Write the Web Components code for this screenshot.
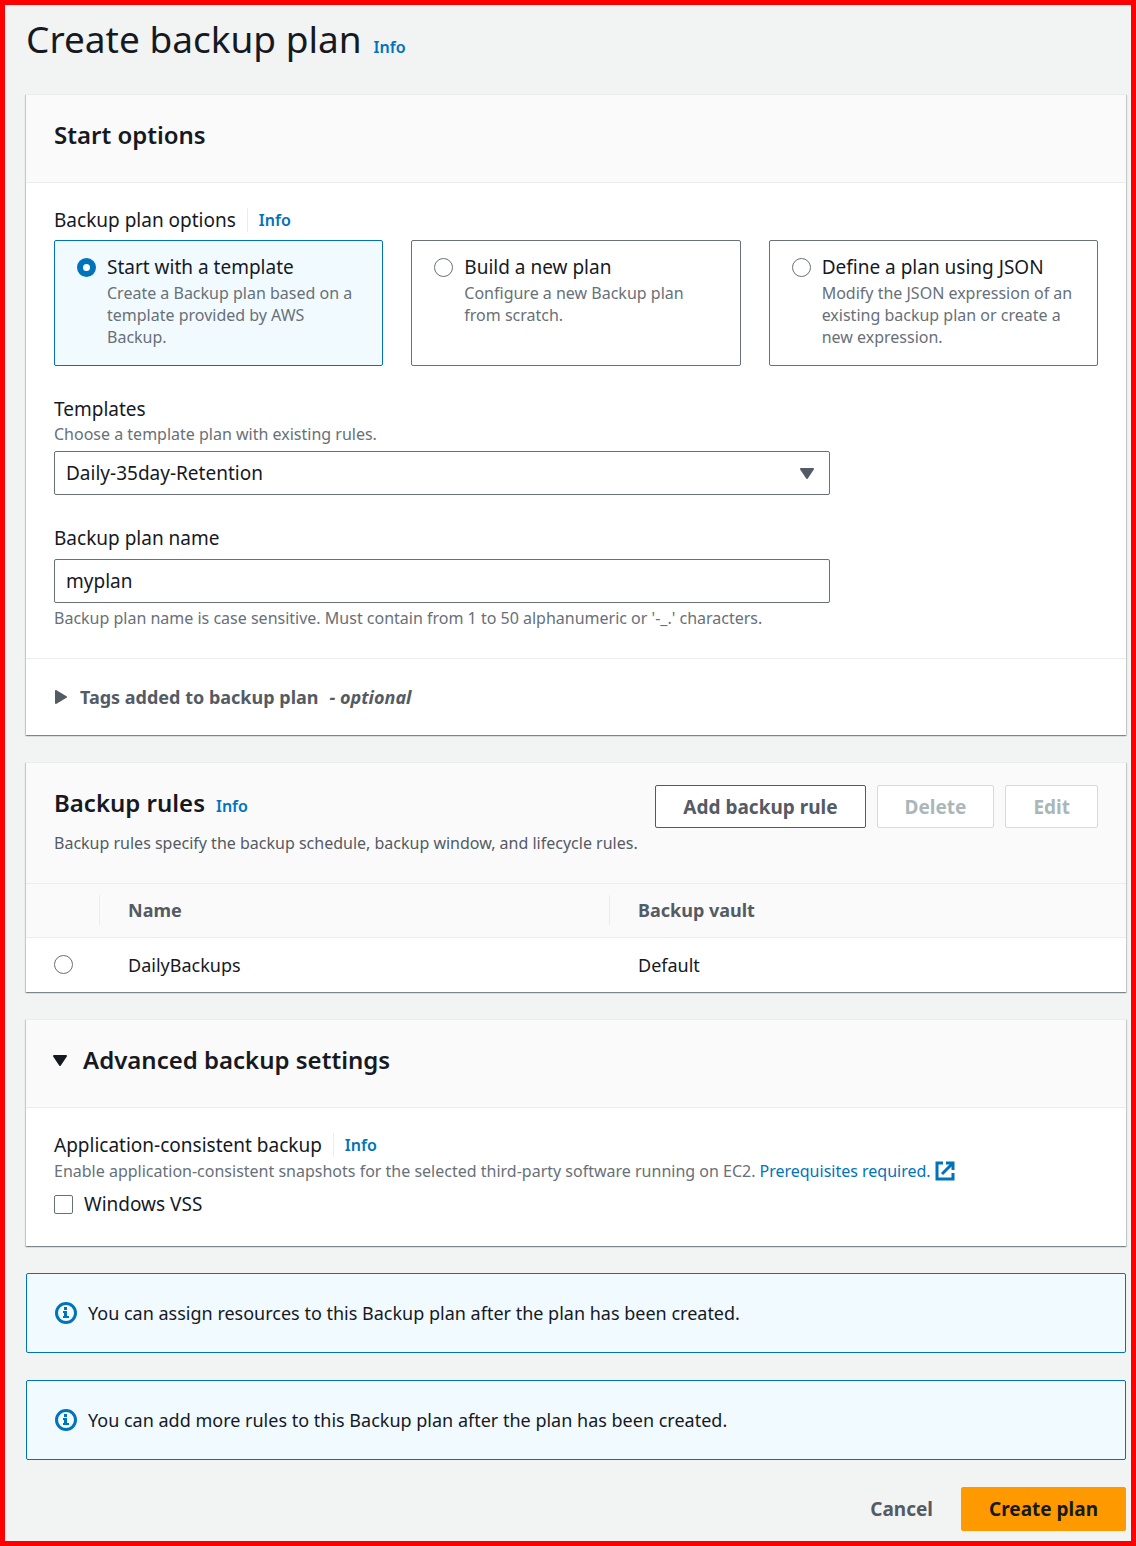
<!DOCTYPE html>
<html lang="en">
<head>
<meta charset="UTF-8">
<meta name="viewport" content="width=device-width, initial-scale=1.0">
<title>Create backup plan</title>
<style>
  :root {
    --text: #16191f;
    --muted: #687078;
    --strong: #545b64;
    --blue: #0073bb;
    --blue-bg: #f1faff;
    --line: #eaeded;
    --gutter: 28px;
    --body: 18px;
    --field: 19px;
    --small: 16px;
  }
  html { background: #f2f3f3; }
  body {
    margin: 0;
    font-family: "Noto Sans", "Open Sans", sans-serif;
    font-size: var(--body);
    line-height: 26px;
    color: var(--text);
  }
</style>
</head>
<body>
<backup-page>
  <page-title slot="title" heading="Create backup plan"></page-title>

  <plan-panel>
    <panel-header slot="header" heading="Start options"></panel-header>
    <plan-tiles></plan-tiles>
    <plan-select label="Templates" hint="Choose a template plan with existing rules." value="Daily-35day-Retention"></plan-select>
    <plan-input label="Backup plan name" hint="Backup plan name is case sensitive. Must contain from 1 to 50 alphanumeric or '-_.' characters." value="myplan"></plan-input>
    <tags-section slot="footer"></tags-section>
  </plan-panel>

  <plan-panel flush>
    <panel-header slot="header" heading="Backup rules" info description="Backup rules specify the backup schedule, backup window, and lifecycle rules.">
      <plan-button slot="actions">Add backup rule</plan-button>
      <plan-button slot="actions" disabled>Delete</plan-button>
      <plan-button slot="actions" disabled>Edit</plan-button>
    </panel-header>
    <rules-table></rules-table>
  </plan-panel>

  <plan-panel>
    <panel-header slot="header" heading="Advanced backup settings" expandable></panel-header>
    <vss-field></vss-field>
  </plan-panel>

  <info-alert>You can assign resources to this Backup plan after the plan has been created.</info-alert>
  <info-alert>You can add more rules to this Backup plan after the plan has been created.</info-alert>

  <plan-button slot="actions" variant="link">Cancel</plan-button>
  <plan-button slot="actions" variant="primary">Create plan</plan-button>
</backup-page>

<script>
const base = `
  :host, *, *::before, *::after { box-sizing: border-box; }
  :host { display: block; }
`;

// shared by every element that draws a form field
const fieldStyles = `
  :host { font-size: var(--field); }
  .label { display: flex; align-items: center; }
  .hint { font-size: var(--small); line-height: 22px; color: var(--muted); }
  .control {
    display: block;
    width: 100%;
    height: 44px;
    margin: 0;
    padding: 0 11px;
    border: 1px solid #687078;
    border-radius: 2px;
    background: #fff;
    color: var(--text);
    font: inherit;
    line-height: 26px;
  }
  .divided {
    display: flex;
    margin-left: 11px;
    padding-left: 11px;
    border-left: 1px solid var(--line);
    line-height: 24px;
  }
`;

const radioStyles = `
  input[type=radio] {
    appearance: none;
    flex: none;
    display: block;
    width: 19px;
    height: 19px;
    margin: 0;
    border: 1px solid #687078;
    border-radius: 50%;
    background: #fff;
  }
  input[type=radio]:checked { border: 6px solid var(--blue); }
`;

const caretDown = `
  <svg width="14" height="11" viewBox="0 0 14 11" aria-hidden="true"><path d="M1 1h12L7 10z" fill="currentColor" stroke="currentColor" stroke-width="2" stroke-linejoin="round"/></svg>
`;

class BackupPage extends HTMLElement {
  constructor() {
    super();
    this.attachShadow({ mode: "open" });
  }
  connectedCallback() {
    this.shadowRoot.innerHTML = `
      <style>
        ${base}
        :host {
          min-height: 100vh;
          padding: 9px 5px 10px 21px;
          border: 5px solid #f00;
          background: #f2f3f3;
        }
        main { display: flex; flex-direction: column; gap: 27px; margin-top: 30px; }
        footer { display: flex; justify-content: flex-end; }
      </style>
      <slot name="title"></slot>
      <main>
        <slot></slot>
        <footer><slot name="actions"></slot></footer>
      </main>
    `;
  }
}
customElements.define("backup-page", BackupPage);

class InfoLink extends HTMLElement {
  constructor() {
    super();
    this.attachShadow({ mode: "open" });
  }
  connectedCallback() {
    this.shadowRoot.innerHTML = `
      <style>
        :host { display: inline-block; font-size: var(--small); }
        a {
          color: var(--blue);
          font-weight: 600;
          text-decoration: none;
        }
        a:hover { text-decoration: underline; }
      </style>
      <a href="#info">Info</a>
    `;
  }
}
customElements.define("info-link", InfoLink);

class PageTitle extends HTMLElement {
  constructor() {
    super();
    this.attachShadow({ mode: "open" });
  }
  connectedCallback() {
    this.shadowRoot.innerHTML = `
      <style>
        ${base}
        :host { display: flex; align-items: baseline; gap: 12px; }
        h1 { margin: 0; font-size: 37px; font-weight: 400; line-height: 50px; }
      </style>
      <h1>${this.getAttribute("heading")}</h1>
      <info-link></info-link>
    `;
  }
}
customElements.define("page-title", PageTitle);

class PlanPanel extends HTMLElement {
  constructor() {
    super();
    this.attachShadow({ mode: "open" });
  }
  connectedCallback() {
    this.shadowRoot.innerHTML = `
      <style>
        ${base}
        :host {
          border-top: 1px solid var(--line);
          background: #fff;
          box-shadow: 0 1px 1px 0 rgba(0,28,36,.3), 1px 1px 1px 0 rgba(0,28,36,.15), -1px 1px 1px 0 rgba(0,28,36,.15);
        }
        .body {
          display: flex;
          flex-direction: column;
          gap: 30px;
          padding: 24px var(--gutter) 29px;
        }
        :host([flush]) .body { padding: 0; }
      </style>
      <section>
        <slot name="header"></slot>
        <div class="body"><slot></slot></div>
        <slot name="footer"></slot>
      </section>
    `;
  }
}
customElements.define("plan-panel", PlanPanel);

class PanelHeader extends HTMLElement {
  constructor() {
    super();
    this.attachShadow({ mode: "open" });
  }
  connectedCallback() {
    const heading = this.getAttribute("heading");
    const description = this.getAttribute("description");
    const info = this.hasAttribute("info") ? "<info-link></info-link>" : "";
    const title = this.hasAttribute("expandable")
      ? `<h2><button type="button" aria-expanded="true">${caretDown}${heading}</button></h2>`
      : `<h2>${heading}</h2>`;
    this.shadowRoot.innerHTML = `
      <style>
        ${base}
        :host {
          display: flex;
          justify-content: space-between;
          align-items: flex-start;
          padding: 22px var(--gutter) 29px;
          border-bottom: 1px solid var(--line);
          background: #fafafa;
        }
        .title { display: flex; align-items: baseline; gap: 11px; }
        h2 { margin: 0; font-size: 24px; font-weight: 600; line-height: 36px; }
        p { margin: 11px 0 0; font-size: var(--small); line-height: 22px; color: var(--strong); }
        .actions { display: flex; gap: 11px; }
        button {
          display: flex;
          align-items: center;
          gap: 16px;
          padding: 0;
          border: 0;
          background: none;
          color: inherit;
          font: inherit;
        }
        svg { display: block; margin-left: -1px; }
      </style>
      <div>
        <div class="title">${title}${info}</div>
        ${description ? `<p>${description}</p>` : ""}
      </div>
      <div class="actions"><slot name="actions"></slot></div>
    `;
  }
}
customElements.define("panel-header", PanelHeader);

class PlanButton extends HTMLElement {
  constructor() {
    super();
    this.attachShadow({ mode: "open" });
  }
  connectedCallback() {
    this.shadowRoot.innerHTML = `
      <style>
        ${base}
        :host { font-size: var(--field); }
        button {
          display: block;
          height: 43px;
          padding: 0 27px;
          border: 1px solid var(--strong);
          border-radius: 2px;
          background: #fff;
          color: var(--strong);
          font: inherit;
          font-weight: 700;
          white-space: nowrap;
          cursor: pointer;
        }
        button:disabled { border-color: #d5dbdb; color: #aab7b8; cursor: default; }
        :host([variant]) button { height: 44px; border-color: transparent; background: none; }
        :host([variant=primary]) button { background: #f90; border-color: #f90; color: var(--text); }
      </style>
      <button type="button" ${this.hasAttribute("disabled") ? "disabled" : ""}><slot></slot></button>
    `;
  }
}
customElements.define("plan-button", PlanButton);

const tiles = [
  { id: "template", title: "Start with a template", text: "Create a Backup plan based on a template provided by AWS Backup." },
  { id: "new", title: "Build a new plan", text: "Configure a new Backup plan from scratch." },
  { id: "json", title: "Define a plan using JSON", text: "Modify the JSON expression of an existing backup plan or create a new expression." },
];

class PlanTiles extends HTMLElement {
  constructor() {
    super();
    this.attachShadow({ mode: "open" });
  }
  connectedCallback() {
    this.shadowRoot.innerHTML = `
      <style>
        ${base}
        ${fieldStyles}
        ${radioStyles}
        .tiles {
          display: grid;
          grid-template-columns: repeat(3, 1fr);
          gap: var(--gutter);
          margin-top: 7px;
        }
        .tile {
          display: flex;
          gap: 11px;
          padding: 13px 18px 17px 22px;
          border: 1px solid #687078;
          border-radius: 2px;
        }
        .tile:has(:checked) { border-color: var(--blue); background: var(--blue-bg); }
        .tile input { margin-top: 4px; }
        .tile span { display: block; }
        .tile .hint { margin-top: 2px; }
      </style>
      <div role="radiogroup" aria-labelledby="legend">
        <div class="label"><span id="legend">Backup plan options</span><span class="divided"><info-link></info-link></span></div>
        <div class="tiles">
          ${tiles.map((t, i) => `
            <label class="tile" for="${t.id}">
              <input type="radio" name="start" id="${t.id}" ${i === 0 ? "checked" : ""}>
              <span><span>${t.title}</span><span class="hint">${t.text}</span></span>
            </label>`).join("")}
        </div>
      </div>
    `;
  }
}
customElements.define("plan-tiles", PlanTiles);

class PlanSelect extends HTMLElement {
  constructor() {
    super();
    this.attachShadow({ mode: "open" });
  }
  connectedCallback() {
    this.shadowRoot.innerHTML = `
      <style>
        ${base}
        ${fieldStyles}
        :host { width: calc(75% - 7px); }
        .hint { margin: 1px 0 6px; }
        .box { display: grid; align-items: center; }
        .box > * { grid-area: 1 / 1; }
        select { appearance: none; }
        svg { justify-self: end; margin-right: 16px; color: var(--strong); pointer-events: none; }
      </style>
      <label class="label" for="field">${this.getAttribute("label")}</label>
      <div class="hint" id="hint">${this.getAttribute("hint")}</div>
      <div class="box">
        <select class="control" id="field" aria-describedby="hint"><option>${this.getAttribute("value")}</option></select>
        ${caretDown}
      </div>
    `;
  }
}
customElements.define("plan-select", PlanSelect);

class PlanInput extends HTMLElement {
  constructor() {
    super();
    this.attachShadow({ mode: "open" });
  }
  connectedCallback() {
    this.shadowRoot.innerHTML = `
      <style>
        ${base}
        ${fieldStyles}
        .control { width: calc(75% - 7px); margin: 8px 0 4px; }
      </style>
      <label class="label" for="field">${this.getAttribute("label")}</label>
      <input class="control" id="field" type="text" value="${this.getAttribute("value")}" aria-describedby="hint">
      <div class="hint" id="hint">${this.getAttribute("hint")}</div>
    `;
  }
}
customElements.define("plan-input", PlanInput);

class TagsSection extends HTMLElement {
  constructor() {
    super();
    this.attachShadow({ mode: "open" });
  }
  connectedCallback() {
    this.shadowRoot.innerHTML = `
      <style>
        ${base}
        :host { padding: 25px var(--gutter); border-top: 1px solid var(--line); }
        button {
          display: flex;
          align-items: center;
          padding: 0;
          border: 0;
          background: none;
          color: var(--strong);
          font: inherit;
          font-weight: 700;
        }
        svg { margin: 0 13px 0 1px; }
        em { margin-left: 11px; }
      </style>
      <button type="button" aria-expanded="false">
        <svg width="12" height="14" viewBox="0 0 12 14" aria-hidden="true"><path d="M1 1v12l10-6z" fill="currentColor" stroke="currentColor" stroke-width="2" stroke-linejoin="round"/></svg>
        <span>Tags added to backup plan</span><em>- optional</em>
      </button>
    `;
  }
}
customElements.define("tags-section", TagsSection);

class RulesTable extends HTMLElement {
  constructor() {
    super();
    this.attachShadow({ mode: "open" });
  }
  connectedCallback() {
    this.shadowRoot.innerHTML = `
      <style>
        ${base}
        ${radioStyles}
        table { width: 100%; border-collapse: collapse; table-layout: fixed; }
        th, td { padding: 0 var(--gutter); text-align: left; }
        th { height: 53px; color: var(--strong); font-weight: 700; }
        td { height: 55px; }
        th:first-child { width: 74px; }
        th:nth-child(2) { width: 510px; }
        thead tr { border-bottom: 1px solid var(--line); background: #fafafa; }
        thead th:not(:last-child) {
          background: linear-gradient(var(--line), var(--line)) right center / 1px 30px no-repeat;
        }
      </style>
      <table>
        <thead>
          <tr><th scope="col"></th><th scope="col">Name</th><th scope="col">Backup vault</th></tr>
        </thead>
        <tbody>
          <tr>
            <td><input type="radio" name="rule" aria-labelledby="rule-name"></td>
            <td id="rule-name">DailyBackups</td>
            <td>Default</td>
          </tr>
        </tbody>
      </table>
    `;
  }
}
customElements.define("rules-table", RulesTable);

class VssField extends HTMLElement {
  constructor() {
    super();
    this.attachShadow({ mode: "open" });
  }
  connectedCallback() {
    this.shadowRoot.innerHTML = `
      <style>
        ${base}
        ${fieldStyles}
        .hint { display: flex; align-items: center; margin: 2px 0 9px; }
        .hint a {
          display: flex;
          align-items: center;
          gap: 4px;
          margin-left: 4px;
          color: var(--blue);
          text-decoration: none;
        }
        .check { display: flex; align-items: center; gap: 11px; }
        input {
          appearance: none;
          width: 19px;
          height: 19px;
          margin: 0;
          border: 1px solid #687078;
          border-radius: 2px;
          background: #fff;
        }
        input:checked { background: var(--blue); }
      </style>
      <div class="label"><span>Application-consistent backup</span><span class="divided"><info-link></info-link></span></div>
      <div class="hint">
        <span>Enable application-consistent snapshots for the selected third-party software running on EC2.</span>
        <a href="#prerequisites">Prerequisites required.
          <svg width="20" height="20" viewBox="0 0 20 20" fill="none" stroke="currentColor" stroke-width="3" aria-hidden="true"><path d="M8 2H2v16h16v-6M11 2h7v7M17 3L7 13"/></svg>
        </a>
      </div>
      <div class="check"><input type="checkbox" id="vss"><label for="vss">Windows VSS</label></div>
    `;
  }
}
customElements.define("vss-field", VssField);

class InfoAlert extends HTMLElement {
  constructor() {
    super();
    this.attachShadow({ mode: "open" });
  }
  connectedCallback() {
    this.shadowRoot.innerHTML = `
      <style>
        ${base}
        :host {
          display: flex;
          align-items: center;
          gap: 11px;
          padding: 26px var(--gutter);
          border: 1px solid var(--blue);
          border-radius: 2px;
          background: var(--blue-bg);
        }
        svg { flex: none; color: var(--blue); }
      </style>
      <svg width="22" height="22" viewBox="0 0 22 22" aria-hidden="true">
        <circle cx="11" cy="11" r="9.5" fill="none" stroke="currentColor" stroke-width="3"/>
        <path d="M9 5h3v3H9zM8 9h4v5h2v2H8v-2h1v-3H8z" fill="currentColor"/>
      </svg>
      <span><slot></slot></span>
    `;
  }
}
customElements.define("info-alert", InfoAlert);
</script>
</body>
</html>
